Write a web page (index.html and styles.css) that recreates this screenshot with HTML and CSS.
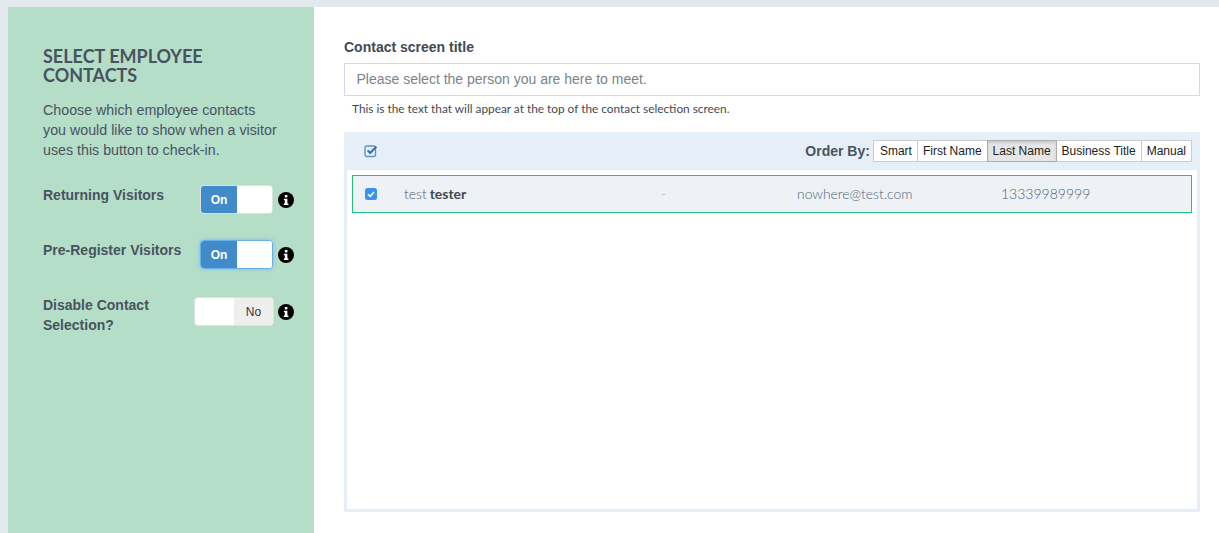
FILE: index.html
```html
<!DOCTYPE html>
<html lang="en">
<head>
<meta charset="utf-8">
<title>Select Employee Contacts</title>
<link rel="stylesheet" href="styles.css">
</head>
<body>
<div class="page">
  <aside class="side">
    <h2 class="side-title">SELECT EMPLOYEE CONTACTS</h2>
    <p class="side-text">Choose which employee contacts you would like to show when a visitor uses this button to check-in.</p>
    <div class="opt opt-1">
      <div class="opt-label">Returning Visitors</div>
      <div class="switch on"><span class="sw-on">On</span><span class="sw-blank"></span></div>
      <svg class="info" viewBox="0 0 16 16"><circle cx="8" cy="8" r="8" fill="#000"/><rect x="6.8" y="3" width="2.6" height="2.4" fill="#fff"/><path d="M5.8 6.7h3.6v4.9h1v1.5H5.8v-1.5h1V8.2h-1z" fill="#fff"/></svg>
    </div>
    <div class="opt opt-2">
      <div class="opt-label">Pre-Register Visitors</div>
      <div class="switch on focus"><span class="sw-on">On</span><span class="sw-blank"></span></div>
      <svg class="info" viewBox="0 0 16 16"><circle cx="8" cy="8" r="8" fill="#000"/><rect x="6.8" y="3" width="2.6" height="2.4" fill="#fff"/><path d="M5.8 6.7h3.6v4.9h1v1.5H5.8v-1.5h1V8.2h-1z" fill="#fff"/></svg>
    </div>
    <div class="opt opt-3">
      <div class="opt-label">Disable Contact<br>Selection?</div>
      <div class="switch off"><span class="sw-blank"></span><span class="sw-no">No</span></div>
      <svg class="info" viewBox="0 0 16 16"><circle cx="8" cy="8" r="8" fill="#000"/><rect x="6.8" y="3" width="2.6" height="2.4" fill="#fff"/><path d="M5.8 6.7h3.6v4.9h1v1.5H5.8v-1.5h1V8.2h-1z" fill="#fff"/></svg>
    </div>
  </aside>
  <main class="main">
    <label class="field-label">Contact screen title</label>
    <div class="field-input">Please select the person you are here to meet.</div>
    <p class="hint">This is the text that will appear at the top of the contact selection screen.</p>
    <section class="panel">
      <div class="panel-head">
        <svg class="all-check" viewBox="0 0 14 14"><rect x="1" y="2" width="10.5" height="10.5" rx="2" fill="none" stroke="#5f93c4" stroke-width="1.4"/><path d="M3.6 6.4l2.6 2.6 6.2-6.4" fill="none" stroke="#2f6ea8" stroke-width="2"/></svg>
        <div class="order">
          <span class="order-label">Order By:</span>
          <div class="btns">
            <span class="btn">Smart</span><span class="btn">First Name</span><span class="btn active">Last Name</span><span class="btn">Business Title</span><span class="btn">Manual</span>
          </div>
        </div>
      </div>
      <div class="panel-body">
        <div class="row">
          <span class="cb"><svg viewBox="0 0 12 12"><rect width="12" height="12" rx="2.5" fill="#3b93f0"/><path d="M3 6.2l2.2 2.2L9 4" fill="none" stroke="#fff" stroke-width="1.6"/></svg></span>
          <span class="c-name"><span class="c-first">test</span> <b>tester</b></span>
          <span class="c-title">-</span>
          <span class="c-mail">nowhere@test.com</span>
          <span class="c-phone">13339989999</span>
        </div>
      </div>
    </section>
  </main>
</div>
</body>
</html>
```

FILE: styles.css
```css
* { box-sizing: border-box; }
html, body { margin: 0; height: 100%; }
body {
  background: #e3e8ec;
  font-family: "Liberation Sans", Arial, sans-serif;
  color: #49545f;
  overflow: hidden;
}
.page {
  display: flex;
  margin: 7px 0 0 8px;
  height: 526px;
  background: #fff;
}
.side {
  width: 306px;
  flex: none;
  background: #b5dec9;
  padding: 40px 20px 0 35px;
}
.side-title {
  margin: 0;
  font: 700 18px/19px Lato, sans-serif;
  color: #48535f;
}
.side-text {
  margin: 15px 0 0;
  max-width: 237px;
  font-size: 14.25px;
  line-height: 20px;
  color: #48535f;
}
.opt { display: flex; align-items: flex-start; }
.opt-1 { margin-top: 25px; }
.opt-2 { margin-top: 26px; }
.opt-3 { margin-top: 28px; }
.opt-label {
  flex: 1;
  font-size: 14px;
  font-weight: 700;
  line-height: 20px;
  color: #48535f;
}
.opt-3 .opt-label { margin-top: -2px; }
.switch {
  display: flex;
  height: 29px;
  border: 1px solid #dbe0e2;
  border-radius: 4px;
  overflow: hidden;
  background: #fff;
  font-size: 12px;
  line-height: 29px;
  flex: none;
}
.switch.on { width: 73px; }
.switch.off { width: 80px; margin-right: -1px; }
.switch.focus { border-color: #66afe9; box-shadow: 0 0 4px rgba(102,175,233,.7); }
.sw-on {
  width: 36px;
  background: #428bca;
  color: #fff;
  font-weight: 700;
  text-align: center;
}
.sw-blank { flex: 1; background: #fff; }
.sw-no { width: 39px; background: #eee; color: #333; text-align: center; }
.info { width: 16px; height: 16px; margin: 7px 0 0 5px; flex: none; }
.main { flex: 1; padding: 32px 19px 0 30px; }
.field-label {
  display: block;
  font-size: 14px;
  font-weight: 700;
  line-height: 16px;
  color: #3f4a55;
}
.field-input {
  margin-top: 8px;
  height: 33px;
  border: 1px solid #d4d9e6;
  padding: 0 11.5px;
  font-size: 14px;
  line-height: 31px;
  color: #7c838a;
}
.hint {
  margin: 5px 0 0 8px;
  font: 400 11.83px/16px Lato, sans-serif;
  color: #3f4a55;
}
.panel {
  margin-top: 15px;
  height: 380px;
  border: 3px solid #e6eff7;
  border-top: 0;
  display: flex;
  flex-direction: column;
}
.panel-head {
  height: 38px;
  background: #e6eff7;
  display: flex;
  align-items: center;
  justify-content: space-between;
  padding: 0 8px 0 17px;
  margin: 0 -3px;
  flex: none;
}
.all-check { width: 14px; height: 14px; margin-left: 3px; }
.order { display: flex; align-items: center; gap: 3px; }
.order-label { font-size: 14px; font-weight: 700; color: #49545f; }
.btns { display: flex; }
.btn {
  height: 22px;
  padding: 0 5px;
  border: 1px solid #ccc;
  border-left-width: 0;
  background: #fff;
  color: #222;
  font-size: 12px;
  line-height: 20px;
}
.btn:first-child { border-left-width: 1px; padding-left: 6px; }
.btn.active {
  background: #e6e6e6;
  border-color: #adadad;
  border-left-width: 1px;
  margin-left: -1px;
  box-shadow: inset 0 2px 3px rgba(0,0,0,.13);
}
.panel-body { padding: 5px 5px 0; flex: 1; }
.row {
  height: 38px;
  background: #eef2f6;
  border: 1px solid #1fc67e;
  display: flex;
  align-items: center;
  font: 300 14px/18px Lato, sans-serif;
  color: #5c6670;
}
.row > span { flex: none; }
.cb { width: 12px; height: 12px; margin-left: 12px; display: flex; }
.cb svg { width: 12px; height: 12px; }
.c-name { width: 257px; margin-left: 27px; word-spacing: -1px; }
.c-first { color: #4f5963; }
.c-name b { font-weight: 700; color: #3f4a55; }
.c-title { width: 136px; color: #9aa1a8; }
.c-mail { width: 204px; font-size: 13.9px; color: #4f6377; }
.c-phone { color: #4f6377; }
```
